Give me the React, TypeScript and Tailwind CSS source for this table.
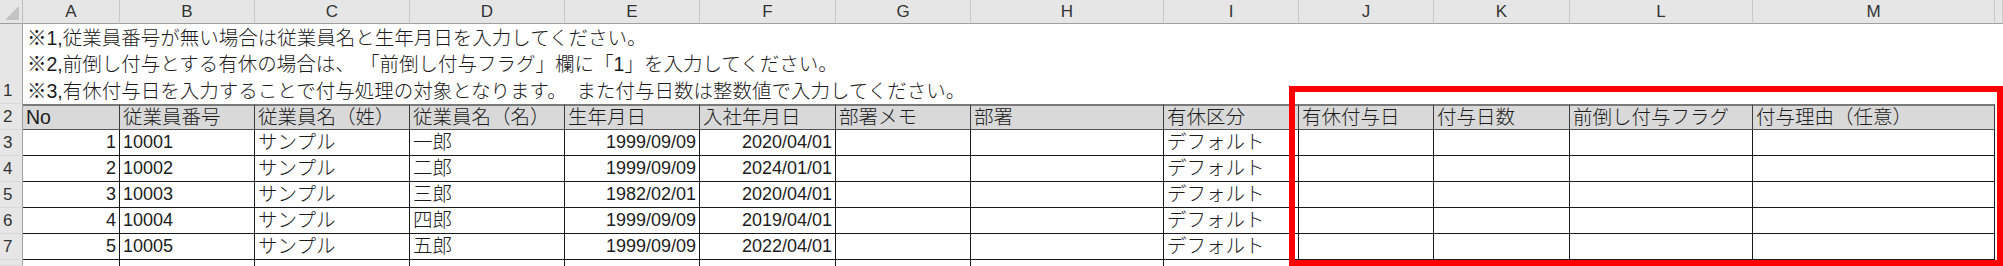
const letters = ["A", "B", "C", "D", "E", "F", "G", "H", "I", "J", "K", "L", "M", ""];

const headers = [
  "No",
  "従業員番号",
  "従業員名（姓）",
  "従業員名（名）",
  "生年月日",
  "入社年月日",
  "部署メモ",
  "部署",
  "有休区分",
  "有休付与日",
  "付与日数",
  "前倒し付与フラグ",
  "付与理由（任意）",
];

const rows = [
  ["1", "10001", "サンプル", "一郎", "1999/09/09", "2020/04/01"],
  ["2", "10002", "サンプル", "二郎", "1999/09/09", "2024/01/01"],
  ["3", "10003", "サンプル", "三郎", "1982/02/01", "2020/04/01"],
  ["4", "10004", "サンプル", "四郎", "1999/09/09", "2019/04/01"],
  ["5", "10005", "サンプル", "五郎", "1999/09/09", "2022/04/01"],
];

// columns where the value is right-aligned (numbers, dates)
const numeric = [0, 4, 5];

function RowHead({ n }: { n: string }) {
  return (
    <div className="flex items-end border-r border-b border-r-[#9f9f9f] border-b-[#dadada] bg-[#e6e6e6] pl-[3px] text-[17px] leading-[24px] text-[#333]">
      {n}
    </div>
  );
}

export default function App() {
  return (
    <div className="relative h-[266px] w-[2003px] overflow-hidden bg-white font-['Liberation_Sans','Noto_Sans_CJK_JP',sans-serif] text-[#1c1c1c]">
      <div className="grid grid-cols-[23px_97px_135px_155px_155px_135px_136px_135px_193px_135px_135px_136px_183px_242px_8px] grid-rows-[24px_80px_26px_26px_26px_26px_26px_26px_6px]">
        {/* column letters */}
        <div className="relative border-r border-b border-r-[#bdbdbd] border-b-[#9f9f9f] bg-[#e6e6e6]">
          <div className="absolute right-[3px] bottom-[3px] h-0 w-0 border-t-[14px] border-l-[14px] border-t-transparent border-l-transparent border-b-0 border-r-[14px] border-r-[#c3c3c3]" />
        </div>
        {letters.map((l, i) => (
          <div
            key={i}
            className="flex items-center justify-center border-r border-b border-r-[#c9c9c9] border-b-[#9f9f9f] bg-[#e6e6e6] text-[17px] text-[#333]"
          >
            {l}
          </div>
        ))}

        {/* row 1: notes */}
        <RowHead n="1" />
        <div className="col-span-14 flex flex-col justify-end whitespace-nowrap pl-[4px] text-[19.5px] font-light leading-[26.5px]">
          <div>※1,従業員番号が無い場合は従業員名と生年月日を入力してください。</div>
          <div>※2,前倒し付与とする有休の場合は、 「前倒し付与フラグ」欄に「1」を入力してください。</div>
          <div>※3,有休付与日を入力することで付与処理の対象となります。　また付与日数は整数値で入力してください。</div>
        </div>

        {/* row 2: headers */}
        <RowHead n="2" />
        {headers.map((h) => (
          <div
            key={h}
            className="flex items-center overflow-hidden whitespace-nowrap border-t-2 border-r border-b border-t-[#7a7a7a] border-r-[#3c3c3c] border-b-[#555] bg-[#d9d9d9] pl-[3px] text-[19.5px] font-light"
          >
            {h}
          </div>
        ))}
        <div className="border-r border-b border-[#e0e0e0]" />

        {/* data rows */}
        {rows.map((r, ri) => (
          <div key={ri} className="contents">
            <RowHead n={String(ri + 3)} />
            {headers.map((_, ci) => {
              const v = ci < r.length ? r[ci] : ci === 8 ? "デフォルト" : "";
              const num = numeric.includes(ci) || ci === 1;
              return (
                <div
                  key={ci}
                  className={`flex items-center overflow-hidden whitespace-nowrap border-r border-b border-[#1a1a1a] px-[3px] ${
                    num ? "text-[18px]" : "text-[19.5px] font-light"
                  } ${numeric.includes(ci) ? "justify-end" : ""}`}
                >
                  {v}
                </div>
              );
            })}
            <div className="border-b border-[#e0e0e0]" />
          </div>
        ))}

        {/* row 8, cut off */}
        <RowHead n="" />
        {headers.map((_, ci) => (
          <div key={ci} className="border-r border-[#1a1a1a]" />
        ))}
        <div />
      </div>

      {/* red highlight box */}
      <div className="absolute top-[86px] left-[1289px] h-[180px] w-[714px] border-[6px] border-[#ff0000]" />
    </div>
  );
}
